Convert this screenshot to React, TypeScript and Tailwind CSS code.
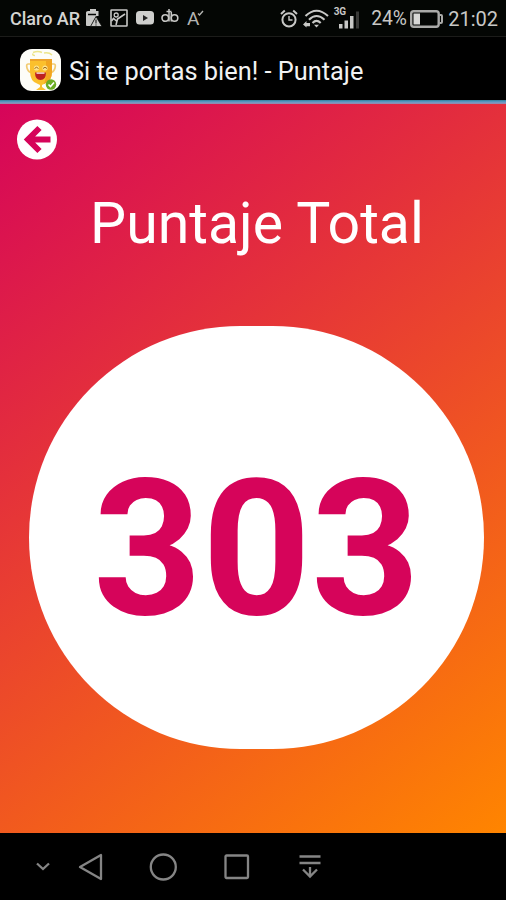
import React from "react";

const StatusBar = () => {
  return (
    <div className="flex h-[37px] items-center border-b border-[#1c1c1a] bg-[#040604] text-[#c8c8c6]">
      <p className="ml-[10px] mt-[2px] w-[75px] whitespace-nowrap text-[18px] font-medium leading-none text-[#d4d4d2]">
        Claro AR
      </p>

      <svg width="17" height="20" viewBox="0 0 17 20" fill="currentColor">
        <path d="M5 1h6v2h2.500V8h-2L9 12l-3 6H2a1 1 0 0 1-1-1V4.500Q1 3 3 3h2z" />
        <path d="M3 6.500h8" stroke="#040604" strokeWidth="1.500" />
        <path d="M11 8.500 17 18.500H5.500z" stroke="#040604" strokeWidth="0.800" />
        <path d="M11 11.500v4M11 16.500v1" stroke="#333" strokeWidth="1.300" />
      </svg>

      <svg className="ml-2" width="18" height="18" viewBox="0 0 18 18" fill="none" stroke="currentColor">
        <rect x="1" y="1" width="16" height="16" rx="0.500" strokeWidth="1.600" />
        <circle cx="6.200" cy="6" r="2" strokeWidth="1.300" />
        <path d="M1.500 12 3.500 9.500 7 12.500M6 16 7.500 10 15 5" strokeWidth="1.600" />
      </svg>

      <svg className="ml-2" width="18" height="14" viewBox="0 0 18 14">
        <rect width="18" height="13.500" rx="3.500" fill="#cfcfcd" />
        <path d="M7 4v6l5-3z" fill="#222" />
      </svg>

      <svg className="mb-[5px] ml-[7px]" width="18" height="15" viewBox="0 0 18 15" fill="none" stroke="currentColor" strokeWidth="1.600">
        <circle cx="4.300" cy="10" r="3.300" />
        <circle cx="13.500" cy="10" r="3.300" />
        <path d="M8 1v12.500M10.300 4v9.500M5.500 3.500h5" strokeWidth="1.500" />
      </svg>

      <div className="ml-2 mt-[2px] flex items-start">
        <span className="text-[19px] leading-[20px] text-[#b4b4b2]">A</span>
        <svg className="-ml-[2px] mt-px" width="7" height="7" viewBox="0 0 7 7" fill="none" stroke="#b4b4b2">
          <path d="M1 3.500 2.500 5 6 1" strokeWidth="1.400" />
        </svg>
      </div>

      <div className="ml-auto flex items-center">
        <svg width="18" height="19" viewBox="0 0 18 19" fill="none" stroke="currentColor" strokeWidth="2">
          <circle cx="9" cy="10.800" r="6.600" />
          <path d="M1 5 4.800 1.500M17 5 13.200 1.500" />
          <path d="M9 7v4h3.500" strokeWidth="1.400" />
        </svg>

        <svg className="ml-[5px]" width="26" height="19" viewBox="0 0 26 19" fill="none" stroke="currentColor" strokeWidth="2.100">
          <path d="M2.500 7Q13.500-3.500 25 7" />
          <path d="M6 10.800Q13.500 3.200 21.500 10.800" />
          <path d="M9.500 14Q13.500 9.800 17.700 14" />
          <path d="M11 15.800h5l-2.500 2.700z" fill="currentColor" stroke="none" />
          <path d="M0 15.500 3.500 12v2h3.500v3.200H3.500V18.500z" fill="currentColor" stroke="none" />
        </svg>

        <div className="ml-[5px] flex h-[25px] items-start">
          <span className="text-[10px] font-bold leading-[11px]">3G</span>
          <svg className="mt-[5px] -ml-[7px]" width="21" height="18" viewBox="0 0 21 18" fill="currentColor">
            <path d="M0 13h3.500v4.500H0zM5.500 9.500H9v8H5.500zM11 5h3.500v12.500H11z" />
            <path d="M17 0.500h3v17h-3z" fill="#3a3a38" />
          </svg>
        </div>

        <span className="ml-[11px] mt-[2px] w-[38px] text-[19.300px] leading-none">24%</span>

        <svg className="ml-px mt-px" width="33" height="18" viewBox="0 0 33 18" fill="none">
          <rect x="1.200" y="1.200" width="27.500" height="15.500" rx="2.500" stroke="#aaaaa8" strokeWidth="2.400" />
          <path d="M29.500 5H31q1 0 1 1v6q0 1-1 1h-1.500" stroke="#aaaaa8" strokeWidth="2" />
          <rect x="3.500" y="3.500" width="6.500" height="11" fill="#d8d8d6" />
        </svg>

        <span className="ml-[5px] mr-2 mt-[2px] text-[20px] leading-none">21:02</span>
      </div>
    </div>
  );
};

const AppLogo = () => {
  return (
    <svg width="41" height="42" viewBox="0 0 41 42">
      <rect width="41" height="42" rx="12" fill="#fdfdf8" />
      <path d="M13 3.500q5-2 9 0M24 4q5-1 8 2M15 6.500q-3 0-2-2" stroke="#ece58a" strokeWidth="1.500" fill="none" />
      <path d="M10 15H8q-2 0-1 4 1 4 5 5M32 15h2q2 0 1 4-1 4-5 5" stroke="#f2cb72" strokeWidth="1.700" fill="none" />
      <path d="M10 10h22v12q0 11-8 13l-2 1v2l4 3H16l4-3v-2l-2-1q-8-2-8-13z" fill="#fbc02d" />
      <path d="M26 10h6v12q0 11-8 13 2-5 2-13z" fill="#f2a51f" />
      <path d="M10 10h22v2H10z" fill="#eda32b" />
      <circle cx="16.500" cy="19" r="2.600" fill="#ffe48c" />
      <circle cx="25" cy="19" r="2.600" fill="#ffe48c" />
      <path d="M14.500 19.500q2-2.500 4 0M23 19.500q2-2.500 4 0" stroke="#9a6418" strokeWidth="1" fill="none" />
      <path d="M15 23.500h11q0 7.500-5.500 7.500T15 23.500z" fill="#bd2020" />
      <path d="M16.500 23.500h8v1.200h-8z" fill="#fff" />
      <circle cx="31" cy="35.500" r="5.200" fill="#6cad24" />
      <path d="M28.500 35.500 30.500 37.500 34 33.500" stroke="#fff" strokeWidth="1.600" fill="none" />
    </svg>
  );
};

const TitleBar = () => {
  return (
    <div className="flex h-[67px] flex-col bg-black">
      <div className="flex flex-1 items-center pl-5">
        <div className="mt-[2px]">
          <AppLogo />
        </div>
        <h1 className="ml-2 mt-[7px] whitespace-nowrap text-[25.350px] leading-none text-[#f2f2f2]">
          Si te portas bien! - Puntaje
        </h1>
      </div>
      <div className="h-1 bg-linear-to-b from-[#2c7d9b] via-[#5f9cc8] to-[#9a86a8]" />
    </div>
  );
};

const NavBar = () => {
  return (
    <div className="flex h-[67px] items-center bg-black pl-[36px] text-[#858585]">
      <svg width="14" height="9" viewBox="0 0 14 9" fill="none" stroke="currentColor" strokeWidth="2.300">
        <path d="M1 1.500 7 7l6-5.500" />
      </svg>
      <svg className="ml-[28px]" width="26" height="28" viewBox="0 0 26 28" fill="none" stroke="currentColor" strokeWidth="2.300">
        <path d="M23 2v24L2 14z" strokeLinejoin="round" />
      </svg>
      <svg className="ml-[45px]" width="28" height="28" viewBox="0 0 28 28" fill="none" stroke="currentColor" strokeWidth="2.300">
        <circle cx="14.300" cy="14" r="12.500" />
      </svg>
      <svg className="ml-[47px]" width="26" height="26" viewBox="0 0 26 26" fill="none" stroke="currentColor" strokeWidth="2.300">
        <rect x="1.500" y="1.500" width="22.500" height="22.500" rx="1" />
      </svg>
      <svg className="ml-[49px]" width="22" height="25" viewBox="0 0 22 25" fill="none" stroke="currentColor" strokeWidth="2.300">
        <path d="M0.500 2.500h21M0.500 9h21M11 13v9M4 15.500l7 7 7-7" />
      </svg>
    </div>
  );
};

const App = () => {
  return (
    <div className="flex h-[900px] w-[506px] flex-col overflow-hidden bg-black font-['Roboto',sans-serif]">
      <StatusBar />
      <TitleBar />

      <main className="flex flex-1 flex-col items-center bg-[linear-gradient(144deg,#d6045a_0%,#ff8500_100%)]">
        <button className="ml-[17px] mt-[15px] self-start" aria-label="Volver">
          <svg width="40" height="41" viewBox="0 0 40 41" fill="none">
            <circle cx="20" cy="20.500" r="20" fill="#fff" />
            <path d="M33.500 20.500H11M22.500 9 11 20.500 22.500 32" stroke="#d6045a" strokeWidth="6" />
          </svg>
        </button>

        <h2 className="ml-[8px] mt-[34px] whitespace-nowrap text-[57.200px] leading-[60px] text-white">
          Puntaje Total
        </h2>

        <div className="ml-[7px] mt-[72px] flex h-[423px] w-[455px] items-center justify-center rounded-full bg-white">
          <span className="mt-[22px] text-[190px] font-bold leading-none text-[#d6045a]">
            303
          </span>
        </div>
      </main>

      <NavBar />
    </div>
  );
};

export default App;
